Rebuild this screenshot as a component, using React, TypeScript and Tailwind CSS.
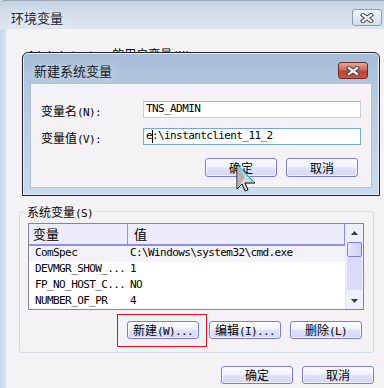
import React from "react";

const cjk = "font-[family-name:'Noto_Sans_CJK_SC',sans-serif]";
const mono = "font-[family-name:'DejaVu_Sans_Mono',monospace] text-[11px] tracking-[-0.6px]";

function Btn({ label, className }: { label: React.ReactNode; className: string }) {
  return (
    <div
      className={`flex items-center justify-center border border-[#7a7ae2] rounded-[3px] bg-[linear-gradient(to_bottom,#fcfcff_0%,#f1f1fd_45%,#e1e1fa_52%,#d5d5f7_100%)] shadow-[inset_0_0_0_1px_#ffffffb0] text-[12px] leading-none text-black ${cjk} ${className}`}
    >
      {label}
    </div>
  );
}

function XGlyph() {
  return (
    <svg width="14" height="10" viewBox="0 0 14 10">
      <path d="M3 2 L11 8 M11 2 L3 8" stroke="#3a4352" strokeWidth="4.2" strokeLinecap="square" />
      <path d="M3 2 L11 8 M11 2 L3 8" stroke="#ffffff" strokeWidth="2.2" strokeLinecap="square" />
    </svg>
  );
}

function Mixed({ zh, en }: { zh: string; en: string }) {
  return (
    <span className="inline-flex items-baseline whitespace-nowrap">
      <span className={`${cjk} text-[12px]`}>{zh}</span>
      <span className={mono}>{en}</span>
    </span>
  );
}

export default function App() {
  const rows: [string, string][] = [
    ["ComSpec", "C:\\Windows\\system32\\cmd.exe"],
    ["DEVMGR_SHOW_...", "1"],
    ["FP_NO_HOST_C...", "NO"],
    ["NUMBER_OF_PR", "4"],
  ];
  return (
    <div className="relative w-[384px] h-[388px] overflow-hidden bg-[#cddcee] text-black">
      {/* outer window */}
      <div className="flex flex-col w-[384px] h-[388px]">
        {/* title bar */}
        <div className="flex items-start h-[29px] border-t border-[#97a4b3] rounded-tl-[5px] bg-[linear-gradient(to_bottom,#c7d3e1_0%,#d3deea_50%,#dde7f2_100%)]">
          <div className={`${cjk} text-[13px] leading-none text-[#1c2230] pl-[11px] pt-[10px] [text-shadow:0_0_6px_#ffffff]`}>
            环境变量
          </div>
          <div className="ml-auto mt-[8px] mr-[2px] w-[30px] h-[17px] flex items-center justify-center border border-[#8c9aae] rounded-[3px] bg-[linear-gradient(to_bottom,#eef3f8,#d6dfea)]">
            <XGlyph />
          </div>
        </div>
        <div className="flex flex-1">
          <div className="w-[7px] bg-[linear-gradient(to_right,#c5d7ec,#d6e4f3)] border-r border-[#e8eef6]" />
          <div className="flex-1 flex flex-col bg-[#f5f2f5]">
            <div className="ml-[21px] mt-[17px] h-[14px] leading-[14px]">
              <span className={mono}>Administrator </span>
              <Mixed zh="的用户变量" en="(U)" />
            </div>
            {/* system variables group */}
            <div className="relative ml-[12px] mr-[10px] mt-[151px] h-[142px] border border-[#d3dbe4] rounded-[3px] pl-[8px] pt-[11px]">
              <div className="absolute -top-[8px] left-[4px] px-[3px] bg-[#f5f2f5] leading-[14px]">
                <Mixed zh="系统变量" en="(S)" />
              </div>
              <div className="flex w-[336px] h-[87px] border border-[#828790] bg-white overflow-hidden">
                <div className="flex flex-col w-[316px]">
                  <div className="flex h-[24px] bg-[#ececfb] border-b-2 border-[#8e8ef0] border-r border-r-[#8e8ef0]">
                    <div className={`w-[99px] border-r border-[#8e8ef0] pl-[4px] flex items-center ${cjk} text-[13px]`}>变量</div>
                    <div className={`pl-[6px] flex items-center ${cjk} text-[13px]`}>值</div>
                  </div>
                  {rows.map(([k, v], i) => (
                    <div key={k} className={`flex h-[16px] items-center ${i === 0 ? "bg-[#f3f3f7]" : "bg-white"}`}>
                      <div className={`w-[99px] pl-[6px] whitespace-nowrap ${mono}`}>{k}</div>
                      <div className={`pl-[2px] whitespace-nowrap ${mono}`}>{v}</div>
                    </div>
                  ))}
                </div>
                <div className="flex flex-col w-[18px] bg-[#f0f0fc] border-l border-[#e4e4f6]">
                  <div className="h-[18px] flex items-center justify-center">
                    <svg width="7" height="4" viewBox="0 0 7 4"><path d="M3.5 0 L7 4 L0 4 Z" fill="#3c3c3c" /></svg>
                  </div>
                  <div className="mx-[1px] h-[15px] border border-[#7f7fe6] rounded-[2px] bg-[linear-gradient(to_right,#e6e6fb,#cfcff6)]" />
                  <div className="mx-[1px] h-[33px] bg-[#dadafa]" />
                  <div className="flex-1" />
                  <div className="h-[16px] flex items-center justify-center">
                    <svg width="7" height="4" viewBox="0 0 7 4"><path d="M0 0 L7 0 L3.5 4 Z" fill="#3c3c3c" /></svg>
                  </div>
                </div>
              </div>
              <div className="flex mt-[11px] pl-[99px]">
                <Btn className="w-[72px] h-[18px]" label={<Mixed zh="新建" en="(W)..." />} />
                <Btn className="ml-[10px] w-[72px] h-[18px]" label={<Mixed zh="编辑" en="(I)..." />} />
                <Btn className="ml-[9px] w-[72px] h-[18px]" label={<Mixed zh="删除" en="(L)" />} />
              </div>
            </div>
            <div className="flex justify-end mr-[10px] mt-[13px] gap-[9px]">
              <Btn className="w-[72px] h-[18px]" label="确定" />
              <Btn className="w-[72px] h-[18px]" label="取消" />
            </div>
          </div>
        </div>
      </div>

      {/* inner dialog */}
      <div className="absolute left-[22px] top-[52px] w-[358px] h-[144px] border border-[#1e2126] rounded-t-[6px] bg-[linear-gradient(to_bottom,#a6bcd7_0%,#b4c8e0_25%,#bfd3ea_70%,#c8dcf1_100%)] shadow-[inset_0_0_0_1px_#e6eef8] flex flex-col">
        <div className="flex items-start h-[30px]">
          <div className={`${cjk} text-[13px] leading-none text-[#101418] pl-[11px] pt-[11px] [text-shadow:0_0_6px_#ffffffaa]`}>新建系统变量</div>
          <div className="ml-auto mt-[9px] mr-[11px] w-[30px] h-[17px] flex items-center justify-center border border-[#6f2b22] rounded-[3px] bg-[linear-gradient(to_bottom,#e5a79a_0%,#d06a58_45%,#bf4331_55%,#c5563f_100%)]">
            <XGlyph />
          </div>
        </div>
        <div className="ml-[7px] mr-[7px] h-[105px] bg-[#f5f2f5] border border-[#aec3dc] flex flex-col pt-[17px] pl-[10px] pr-[10px]">
          <div className="flex items-center h-[17px]">
            <div className="w-[102px]"><Mixed zh="变量名" en="(N):" /></div>
            <div className="w-[218px] h-[17px] bg-white border border-[#c9ced6] border-t-[#abadb3] flex items-center pl-[2px]">
              <span className={mono}>TNS_ADMIN</span>
            </div>
          </div>
          <div className="flex items-center h-[17px] mt-[10px]">
            <div className="w-[102px]"><Mixed zh="变量值" en="(V):" /></div>
            <div className="w-[218px] h-[17px] bg-white border border-[#7aa7d4] flex items-center pl-[2px] whitespace-nowrap">
              <span className={mono}>e</span>
              <span className="inline-block w-px h-[13px] bg-black -mr-px" />
              <span className={mono}>:\instantclient_11_2</span>
            </div>
          </div>
          <div className="flex justify-end mt-[13px] pr-[3px] gap-[9px]">
            <Btn className="w-[72px] h-[19px] border-[#6c6cdc] shadow-[inset_0_0_0_1px_#c8dcf8]" label="确定" />
            <Btn className="w-[72px] h-[19px]" label="取消" />
          </div>
        </div>
      </div>

      {/* red highlight */}
      <div className="absolute left-[117px] top-[314px] w-[90px] h-[33px] border border-[#e8141a]" />

      {/* mouse cursor */}
      <svg className="absolute left-[236px] top-[164px]" width="22" height="30" viewBox="0 0 22 30">
        <path d="M1 1 L1 25 L6 20 L9 27 L12 26 L9 19 L19 19 Z" fill="#d8d8d8" stroke="#000" strokeWidth="1" />
        <path d="M1.5 2 L1.5 24 L9 13 Z" fill="#b4b4b4" />
        <path d="M2 2 L18 18.5" stroke="#38cdd6" strokeWidth="1.3" />
      </svg>
    </div>
  );
}
